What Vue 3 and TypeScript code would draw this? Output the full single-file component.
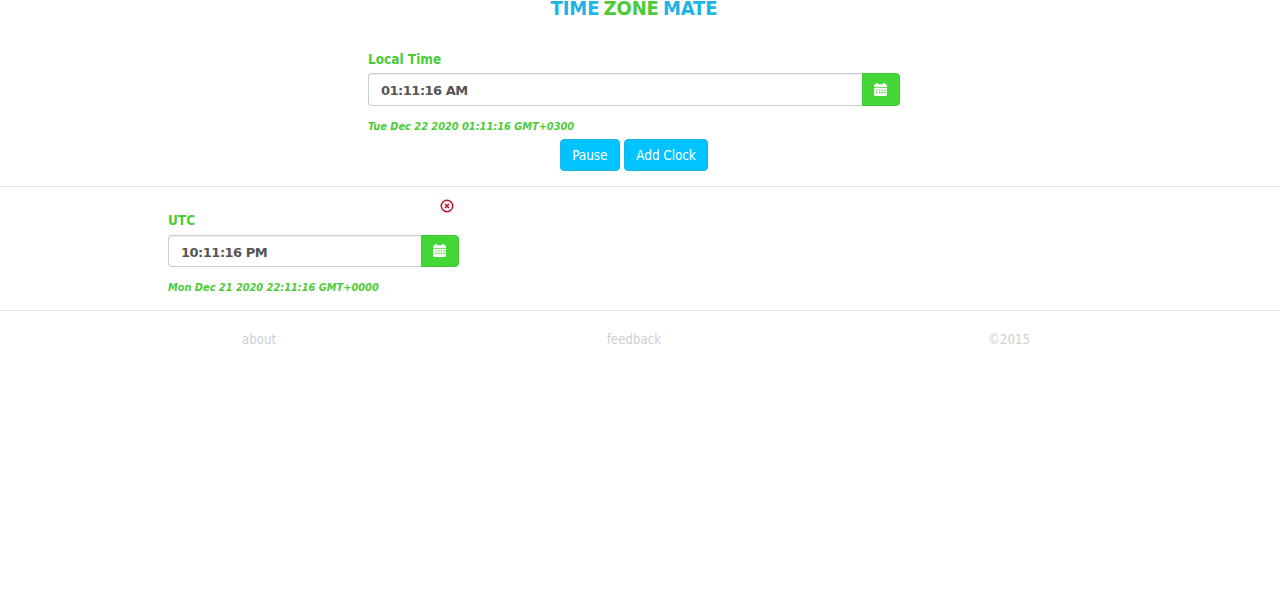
<script setup lang="ts">
const footerLinks = ['about', 'feedback', '©2015']
</script>

<template>
  <div class="page">
    <h1 class="title">TIME <span class="green">ZONE</span> MATE</h1>

    <section class="local">
      <label class="label">Local Time</label>
      <div class="input-group">
        <input class="time-input" type="text" value="01:11:16 AM" />
        <button class="cal-btn" type="button" aria-label="calendar">
          <svg width="15" height="15" viewBox="0 0 14 14">
            <path fill="#fff" d="M1 3.2c0-.6.5-1 1-1h1V1h1.6v1.2h4.8V1H11v1.2h1c.6 0 1 .4 1 1v1.6H1z" />
            <path fill="#fff" fill-rule="evenodd" d="M1 5.6h12V12c0 .6-.4 1-1 1H2c-.6 0-1-.4-1-1zM3 7v1h1.4V7zm2.6 0v1H7V7zm2.6 0v1h1.4V7zm2.4 0v1H12V7zM3 9.2v1h1.4v-1zm2.6 0v1H7v-1zm2.6 0v1h1.4v-1zm2.4 0v1H12v-1z" />
          </svg>
        </button>
      </div>
      <p class="date">Tue Dec 22 2020 01:11:16 GMT+0300</p>
    </section>

    <div class="actions">
      <button class="action" type="button">Pause</button>
      <button class="action" type="button">Add Clock</button>
    </div>

    <hr class="rule rule-top" />

    <section class="clocks">
      <div class="clock">
        <button class="remove" type="button" aria-label="remove">
          <svg width="14" height="14" viewBox="0 0 14 14" fill="none" stroke="#c0102a">
            <circle cx="7" cy="7" r="5.7" stroke-width="1.5" />
            <path d="M5 5l4 4M9 5l-4 4" stroke-width="1.6" />
          </svg>
        </button>
        <label class="label">UTC</label>
        <div class="input-group">
          <input class="time-input" type="text" value="10:11:16 PM" />
          <button class="cal-btn" type="button" aria-label="calendar">
            <svg width="15" height="15" viewBox="0 0 14 14">
              <path fill="#fff" d="M1 3.2c0-.6.5-1 1-1h1V1h1.6v1.2h4.8V1H11v1.2h1c.6 0 1 .4 1 1v1.6H1z" />
              <path fill="#fff" fill-rule="evenodd" d="M1 5.6h12V12c0 .6-.4 1-1 1H2c-.6 0-1-.4-1-1zM3 7v1h1.4V7zm2.6 0v1H7V7zm2.6 0v1h1.4V7zm2.4 0v1H12V7zM3 9.2v1h1.4v-1zm2.6 0v1H7v-1zm2.6 0v1h1.4v-1zm2.4 0v1H12v-1z" />
            </svg>
          </button>
        </div>
        <p class="date">Mon Dec 21 2020 22:11:16 GMT+0000</p>
      </div>
    </section>

    <hr class="rule rule-bottom" />

    <footer class="footer">
      <a v-for="item in footerLinks" :key="item" class="footer-item">{{ item }}</a>
    </footer>
  </div>
</template>

<style scoped>
.page {
  font-family: "DejaVu Sans Condensed", "DejaVu Sans", sans-serif;
  font-size: 14px;
  color: #555;
  padding-bottom: 1px;
}

.title {
  margin: 0;
  padding-right: 12px;
  height: 18px;
  line-height: 16px;
  text-align: center;
  font-size: 20px;
  font-weight: 700;
  letter-spacing: -0.1px;
  word-spacing: -2px;
  color: #1eb4e6;
}

.green {
  color: #4ccb38;
}

.local {
  width: 532px;
  margin: 31px 0 0 368px;
}

.label {
  display: block;
  height: 20px;
  margin-bottom: 4px;
  line-height: 20px;
  font-size: 13.5px;
  font-weight: 700;
  color: #4ccb38;
}

.input-group {
  display: flex;
}

.time-input {
  flex: 1;
  min-width: 0;
  height: 33px;
  box-sizing: border-box;
  padding: 2px 12px 0;
  border: 1px solid #ccc;
  border-right: 0;
  border-radius: 4px 0 0 4px;
  box-shadow: inset 0 1px 1px rgba(0, 0, 0, 0.075);
  outline: none;
  font-family: "DejaVu Sans", sans-serif;
  font-size: 13px;
  font-weight: 700;
  letter-spacing: -0.5px;
  color: #555;
}

.cal-btn {
  display: flex;
  align-items: center;
  justify-content: center;
  width: 38px;
  height: 33px;
  padding: 0 2px 1px 0;
  border: 1px solid #3ec833;
  border-radius: 0 4px 4px 0;
  background: #43d637;
}

.clock .label {
  margin-bottom: 5px;
}

.clock .time-input,
.clock .cal-btn {
  height: 32px;
}

.date {
  margin: 14px 0 0;
  height: 14px;
  line-height: 14px;
  font-size: 10.9px;
  font-weight: 700;
  font-style: italic;
  color: #4ccb38;
}

.actions {
  display: flex;
  justify-content: center;
  gap: 4px;
  margin-top: 5px;
  padding-right: 12px;
}

.action {
  height: 32px;
  padding: 0 11.5px;
  border: 1px solid #18b4e4;
  border-radius: 4px;
  background: #00c3ff;
  font-family: "DejaVu Sans Condensed", "DejaVu Sans", sans-serif;
  font-size: 13.5px;
  letter-spacing: -0.1px;
  color: #fff;
}

.rule {
  margin: 0;
  border: 0;
  border-top: 1px solid #e3e3e3;
}

.rule-top {
  margin-top: 15px;
}

.clocks {
  display: flex;
  padding: 23px 0 0 168px;
}

.clock {
  position: relative;
  width: 291px;
}

.remove {
  position: absolute;
  top: -11px;
  right: 5px;
  display: flex;
  width: 14px;
  height: 14px;
  padding: 0;
  border: 0;
  background: none;
}

.rule-bottom {
  margin-top: 15px;
}

.footer {
  display: grid;
  grid-template-columns: repeat(3, 375px);
  justify-content: center;
  margin-top: 20px;
  padding-right: 12px;
  text-align: center;
  line-height: 17px;
  color: #cfcfcf;
  font-size: 13.2px;
}
</style>

<style>
html,
body {
  background: #fff;
}
</style>
